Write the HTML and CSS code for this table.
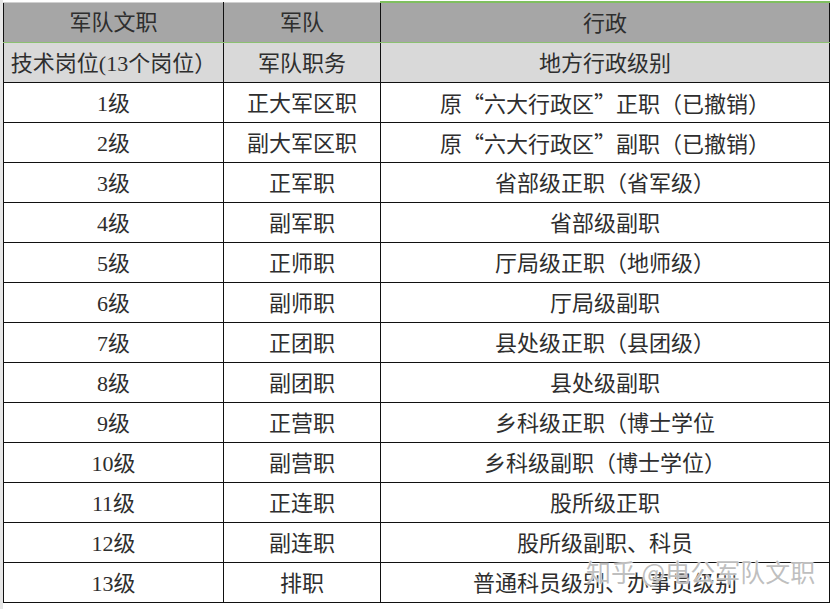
FILE: index.html
```html
<!DOCTYPE html>
<html lang="zh-CN">
<head>
<meta charset="utf-8">
<title>军队文职级别对照</title>
<link rel="stylesheet" href="styles.css">
</head>
<body>
<div class="sheet">
  <table class="grade">
    <colgroup>
      <col class="c1"><col class="c2"><col class="c3">
    </colgroup>
    <tr class="head">
      <td>军队文职</td><td>军队</td><td class="last">行政</td>
    </tr>
    <tr class="sub">
      <td>技术岗位(13个岗位）</td><td>军队职务</td><td>地方行政级别</td>
    </tr>
    <tr><td>1级</td><td>正大军区职</td><td>原<span class="q">“</span>六大行政区<span class="q">”</span>正职（已撤销）</td></tr>
    <tr><td>2级</td><td>副大军区职</td><td>原<span class="q">“</span>六大行政区<span class="q">”</span>副职（已撤销）</td></tr>
    <tr><td>3级</td><td>正军职</td><td>省部级正职（省军级）</td></tr>
    <tr><td>4级</td><td>副军职</td><td>省部级副职</td></tr>
    <tr><td>5级</td><td>正师职</td><td>厅局级正职（地师级）</td></tr>
    <tr><td>6级</td><td>副师职</td><td>厅局级副职</td></tr>
    <tr><td>7级</td><td>正团职</td><td>县处级正职（县团级）</td></tr>
    <tr><td>8级</td><td>副团职</td><td>县处级副职</td></tr>
    <tr><td>9级</td><td>正营职</td><td>乡科级正职（博士学位</td></tr>
    <tr><td>10级</td><td>副营职</td><td>乡科级副职（博士学位）</td></tr>
    <tr><td>11级</td><td>正连职</td><td>股所级正职</td></tr>
    <tr><td>12级</td><td>副连职</td><td>股所级副职、科员</td></tr>
    <tr><td>13级</td><td>排职</td><td>普通科员级别、办事员级别</td></tr>
  </table>
  <div class="watermark">知乎 @电公军队文职</div>
</div>
</body>
</html>
```

FILE: styles.css
```css
html, body {
  margin: 0;
  padding: 0;
  background: #ffffff;
}

.sheet {
  position: relative;
  width: 832px;
  height: 609px;
  overflow: hidden;
  padding: 1px 0 0 3px;
  box-sizing: border-box;
  background: linear-gradient(to right, #e6e6e6 0, #e6e6e6 3px, #ffffff 3px);
}

.grade {
  border-collapse: collapse;
  table-layout: fixed;
  width: 826px;
  background: #ffffff;
}

.c1 { width: 220px; }
.c2 { width: 157px; }
.c3 { width: 449px; }

.grade td {
  height: 37px;
  padding: 2px 0 0 0;
  border: 1px solid #111111;
  text-align: center;
  vertical-align: middle;
  font-family: "Liberation Serif", "Noto Sans CJK SC", serif;
  font-size: 22px;
  line-height: 24px;
  color: #2e2e2e;
  white-space: nowrap;
}

.grade .q {
  font-family: "Noto Sans CJK SC", sans-serif;
}

.head td {
  background: #a6a6a6;
  border-top: 1px solid #d0d0d0;
  border-bottom: 1px solid #8cc072;
}

.head td.last {
  border-top: 2px solid #7fbf5f;
}

.sub td {
  background: #d9d9d9;
  border-top: 1px solid #8cc072;
}

.watermark {
  position: absolute;
  left: 586px;
  top: 555px;
  font-family: "Noto Sans CJK SC", sans-serif;
  font-size: 25px;
  line-height: 32px;
  color: rgba(170, 170, 170, 0.75);
  text-shadow: 0 0 2px #ffffff, 0 0 1px #ffffff;
  white-space: nowrap;
}
```
